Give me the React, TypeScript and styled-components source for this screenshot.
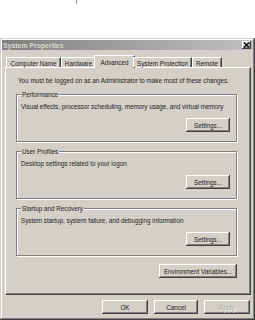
import React from 'react'
import styled, { createGlobalStyle } from 'styled-components'

const Global = createGlobalStyle`
  html, body {
    margin: 0;
    padding: 0;
    background: #fff;
  }
  body {
    font-family: "Liberation Sans", Arial, sans-serif;
    font-size: 6.3px;
    color: #222;
  }
`

const App = () => {
  return (
    <Page>
      <Global />
      <Caret />
      <Window>
        <TitleBar>
          <Title>System Properties</Title>
          <CloseBtn>
            <svg width="7" height="6" viewBox="0 0 7 6">
              <path d="M1 0.5 L6 5.5 M6 0.5 L1 5.5" stroke="#000" strokeWidth="1.2" />
            </svg>
          </CloseBtn>
        </TitleBar>

        <Tabs>
          <Tab w={55}>Computer Name</Tab>
          <Tab w={35}>Hardware</Tab>
          <Tab w={41} active>Advanced</Tab>
          <Tab w={59}>System Protection</Tab>
          <Tab w={30}>Remote</Tab>
        </Tabs>

        <Panel>
          <Intro>You must be logged on as an Administrator to make most of these changes.</Intro>

          <Group>
            <Legend>Performance</Legend>
            <Desc>Visual effects, processor scheduling, memory usage, and virtual memory</Desc>
            <GroupFoot>
              <Button w={44}>Settings...</Button>
            </GroupFoot>
          </Group>

          <Group>
            <Legend>User Profiles</Legend>
            <Desc>Desktop settings related to your logon</Desc>
            <GroupFoot>
              <Button w={44}>Settings...</Button>
            </GroupFoot>
          </Group>

          <Group>
            <Legend>Startup and Recovery</Legend>
            <Desc>System startup, system failure, and debugging information</Desc>
            <GroupFoot>
              <Button w={44}>Settings...</Button>
            </GroupFoot>
          </Group>

          <EnvRow>
            <Button w={78}>Environment Variables...</Button>
          </EnvRow>
        </Panel>

        <Footer>
          <Button w={46}>OK</Button>
          <Button w={44}>Cancel</Button>
          <Button w={46} disabled>Apply</Button>
        </Footer>
      </Window>
    </Page>
  )
}

export default App

const Page = styled.div`
  width: 255px;
  height: 320px;
  overflow: hidden;
`
const Caret = styled.div`
  width: 1px;
  height: 4px;
  margin-left: 76px;
  background: #8c8cf0;
`
const Window = styled.div`
  margin-top: 34px;
  width: 255px;
  height: 282px;
  box-sizing: border-box;
  background: #d4d0c8;
  padding: 2px 3px;
  display: flex;
  flex-direction: column;
  box-shadow: inset -1px -1px 0 #404040, inset 1px 1px 0 #d4d0c8,
    inset -2px -2px 0 #808080, inset 2px 2px 0 #fff;
`
const TitleBar = styled.div`
  height: 10px;
  margin: 0 -1px;
  display: flex;
  align-items: center;
  justify-content: space-between;
  padding: 0 2px 0 1px;
  background: linear-gradient(to right, #808080, #c0c0c0);
`
const Title = styled.span`
  font-weight: bold;
  font-size: 6.9px;
  color: #dcd8d0;
`
const CloseBtn = styled.div`
  width: 9px;
  height: 8px;
  box-sizing: border-box;
  display: flex;
  align-items: center;
  justify-content: center;
  background: #d4d0c8;
  box-shadow: inset -1px -1px 0 #404040, inset 1px 1px 0 #fff,
    inset -2px -2px 0 #808080;
`
const Tabs = styled.div`
  display: flex;
  align-items: flex-end;
  margin-top: 5px;
  padding-left: 3px;
  height: 12px;
  position: relative;
  z-index: 1;
`
const Tab = styled.div<{ w: number; active?: boolean }>`
  width: ${p => p.w}px;
  flex-shrink: 0;
  height: ${p => (p.active ? '13px' : '10px')};
  margin: ${p => (p.active ? '0 -2px -1px' : '0')};
  box-sizing: border-box;
  display: flex;
  align-items: center;
  justify-content: center;
  padding-top: ${p => (p.active ? '0' : '1px')};
  background: #d4d0c8;
  border-top: 1px solid #fff;
  border-left: 1px solid #fff;
  border-right: 1px solid #404040;
  border-top-left-radius: 1px;
  border-top-right-radius: 1px;
  box-shadow: inset -1px 0 0 #808080;
  white-space: nowrap;
`
const Panel = styled.div`
  margin: 0 1px 0 2px;
  height: 228px;
  box-sizing: border-box;
  padding: 8px 13px 0 10px;
  display: flex;
  flex-direction: column;
  border-top: 1px solid #fff;
  border-left: 1px solid #fff;
  border-right: 1px solid #404040;
  border-bottom: 1px solid #404040;
  box-shadow: inset -1px -1px 0 #808080;
`
const Intro = styled.div`
  padding-left: 2px;
  height: 9px;
  line-height: 9px;
  margin-bottom: 9px;
  white-space: nowrap;
`
const Group = styled.div`
  position: relative;
  height: 48px;
  box-sizing: border-box;
  margin-bottom: 9px;
  border: 1px solid #808080;
  box-shadow: 1px 1px 0 #fff, inset 1px 1px 0 #fff;
  padding: 7px 6px 0 4px;
  display: flex;
  flex-direction: column;
`
const Legend = styled.span`
  position: absolute;
  top: -5px;
  left: 4px;
  padding: 0 1px;
  line-height: 9px;
  background: #d4d0c8;
`
const Desc = styled.div`
  line-height: 9px;
  white-space: nowrap;
`
const GroupFoot = styled.div`
  display: flex;
  justify-content: flex-end;
  margin-top: 7px;
`
const Button = styled.div<{ w: number; disabled?: boolean }>`
  width: ${p => p.w}px;
  height: 14px;
  box-sizing: border-box;
  display: flex;
  align-items: center;
  justify-content: center;
  background: #d4d0c8;
  white-space: nowrap;
  color: ${p => (p.disabled ? '#a0a0a0' : '#222')};
  text-shadow: ${p => (p.disabled ? '1px 1px 0 #fff' : 'none')};
  box-shadow: inset -1px -1px 0 #404040, inset 1px 1px 0 #fff,
    inset -2px -2px 0 #808080;
`
const EnvRow = styled.div`
  display: flex;
  justify-content: flex-end;
  margin-top: -1px;
`
const Footer = styled.div`
  display: flex;
  justify-content: flex-end;
  gap: 6px;
  margin-top: 5px;
  padding-right: 2px;
`
